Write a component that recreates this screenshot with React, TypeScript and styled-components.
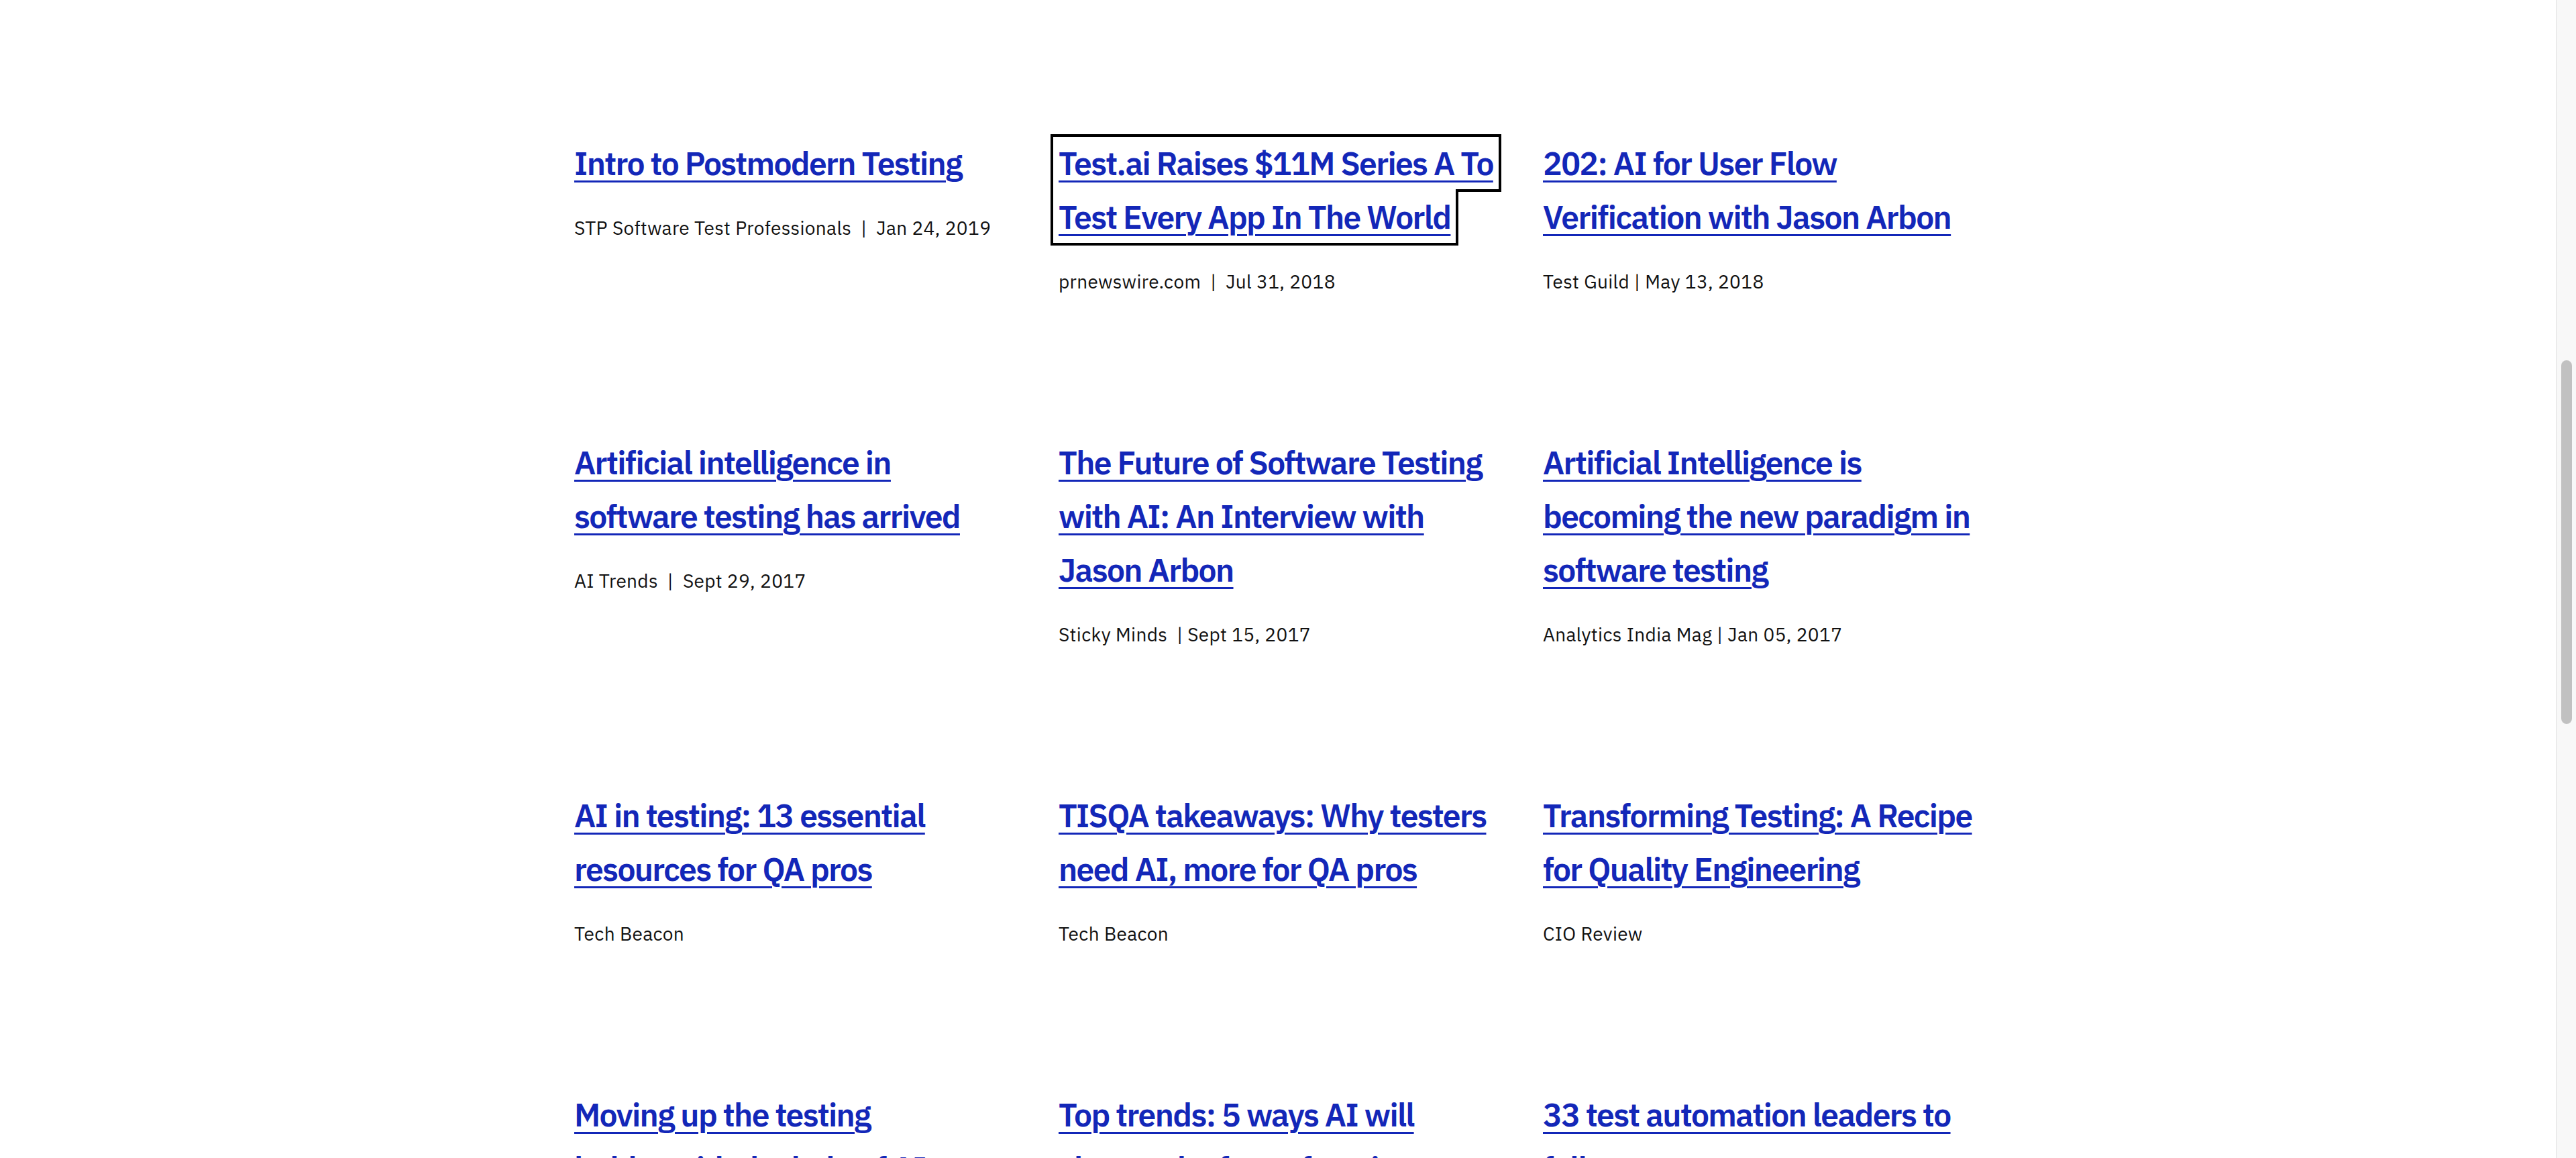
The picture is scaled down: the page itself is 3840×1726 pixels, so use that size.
import React from "react";
import styled, { createGlobalStyle } from "styled-components";

/*
  Press coverage grid: three columns of linked headlines with a
  source / date line under each. The page is shown scrolled part way.
*/

const GlobalStyle = createGlobalStyle`
  html, body {
    margin: 0;
    padding: 0;
    background: #ffffff;
    overflow: hidden;
  }
`;

const Page = styled.div`
  display: flex;
  height: 1726px;
  overflow: hidden;
  font-family: "IBM Plex Sans", Roboto, "Liberation Sans", sans-serif;
`;

const Content = styled.main`
  flex: 1;
  display: flex;
  justify-content: center;
  padding-top: 203px;
`;

const Grid = styled.section`
  width: 2098px;
  display: grid;
  grid-template-columns: repeat(3, minmax(0, 1fr));
  column-gap: 68px;
  row-gap: 209px;
  align-content: start;
`;

const Card = styled.article`
  display: flex;
  flex-direction: column;
  align-items: flex-start;
  min-width: 0;
`;

const Title = styled.h3`
  margin: 0;
  font-size: 48px;
  line-height: 80px;
  font-weight: 600;
  letter-spacing: -1.65px;
  white-space: nowrap;
`;

const TitleLink = styled.a<{ $focused?: boolean }>`
  color: #1327b8;
  text-decoration: underline;
  text-decoration-thickness: 3px;
  text-underline-offset: 8px;
  outline: ${p => (p.$focused ? "4px solid #000" : "none")};
  outline-offset: 8px;
`;

const Meta = styled.p`
  margin: 37px 0 0;
  font-size: 28px;
  line-height: 40px;
  letter-spacing: 0.35px;
  color: #111111;
  white-space: pre;
`;

const ScrollTrack = styled.div`
  flex: none;
  width: 29px;
  background: #f8f8f8;
  border-left: 1px solid #e2e2e2;
`;

const ScrollThumb = styled.div`
  margin: 537px 0 0 7px;
  width: 16px;
  height: 542px;
  border-radius: 8px;
  background: #c1c1c1;
`;

type Article = {
  lines: string[];
  meta: string;
  focused?: boolean;
};

const articles: Article[] = [
  {
    lines: ["Intro to Postmodern Testing"],
    meta: "STP Software Test Professionals  |  Jan 24, 2019",
  },
  {
    lines: ["Test.ai Raises $11M Series A To", "Test Every App In The World"],
    meta: "prnewswire.com  |  Jul 31, 2018",
    focused: true,
  },
  {
    lines: ["202: AI for User Flow", "Verification with Jason Arbon"],
    meta: "Test Guild | May 13, 2018",
  },
  {
    lines: ["Artificial intelligence in", "software testing has arrived"],
    meta: "AI Trends  |  Sept 29, 2017",
  },
  {
    lines: ["The Future of Software Testing", "with AI: An Interview with", "Jason Arbon"],
    meta: "Sticky Minds  | Sept 15, 2017",
  },
  {
    lines: ["Artificial Intelligence is", "becoming the new paradigm in", "software testing"],
    meta: "Analytics India Mag | Jan 05, 2017",
  },
  {
    lines: ["AI in testing: 13 essential", "resources for QA pros"],
    meta: "Tech Beacon",
  },
  {
    lines: ["TISQA takeaways: Why testers", "need AI, more for QA pros"],
    meta: "Tech Beacon",
  },
  {
    lines: ["Transforming Testing: A Recipe", "for Quality Engineering"],
    meta: "CIO Review",
  },
  {
    lines: ["Moving up the testing", "ladder with the help of AI"],
    meta: "Tech Beacon",
  },
  {
    lines: ["Top trends: 5 ways AI will", "change the face of testing"],
    meta: "Tech Beacon",
  },
  {
    lines: ["33 test automation leaders to", "follow"],
    meta: "Tech Beacon",
  },
];

const App: React.FC = () => {
  return (
    <>
      <GlobalStyle />
      <Page>
        <Content>
          <Grid>
            {articles.map((a, i) => (
              <Card key={i}>
                <Title>
                  <TitleLink href="#" $focused={a.focused}>
                    {a.lines.map((line, j) => (
                      <React.Fragment key={j}>
                        {j > 0 && <br />}
                        {line}
                      </React.Fragment>
                    ))}
                  </TitleLink>
                </Title>
                <Meta>{a.meta}</Meta>
              </Card>
            ))}
          </Grid>
        </Content>
        <ScrollTrack>
          <ScrollThumb />
        </ScrollTrack>
      </Page>
    </>
  );
};

export default App;
